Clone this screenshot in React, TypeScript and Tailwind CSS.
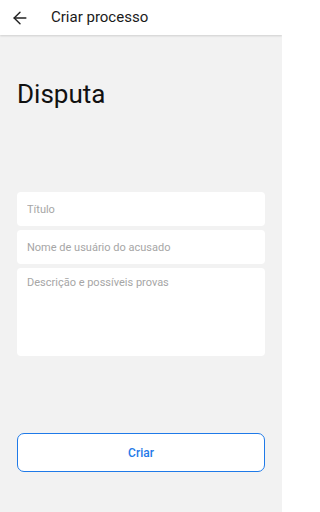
import { ArrowLeft } from 'lucide-react';

export default function App() {
  return (
    <div
      className="flex h-[512px] w-[282px] flex-col overflow-hidden bg-[#f2f2f2]"
      style={{ fontFamily: 'Roboto, "Noto Sans", sans-serif' }}
    >
      {/* Top bar */}
      <header className="flex h-[35px] shrink-0 items-center bg-white shadow-[0_1px_2px_rgba(0,0,0,0.15)]">
        <button className="ml-[10px] flex h-[20px] w-[20px] items-center justify-center text-[#222]">
          <ArrowLeft size={20} strokeWidth={1.7} />
        </button>
        <h1 className="ml-[21px] text-[15px] font-normal text-[#1a1a1a]">Criar processo</h1>
      </header>

      <main className="flex flex-1 flex-col px-[17px]">
        <h2 className="mt-[43px] text-[26px] leading-[32px] text-[#111]">Disputa</h2>

        {/* Form fields */}
        <div className="mt-[82px] flex flex-col gap-[4px]">
          <input
            placeholder="Título"
            className="h-[34px] w-full rounded-[4px] bg-white px-[10px] text-[11px] text-[#222] outline-none placeholder:text-[#a6a6a6]"
          />
          <input
            placeholder="Nome de usuário do acusado"
            className="h-[34px] w-full rounded-[4px] bg-white px-[10px] text-[11px] text-[#222] outline-none placeholder:text-[#a6a6a6]"
          />
          <textarea
            placeholder="Descrição e possíveis provas"
            className="h-[88px] w-full resize-none rounded-[4px] bg-white px-[10px] py-[8px] text-[11px] leading-[14px] text-[#222] outline-none placeholder:text-[#a6a6a6]"
          />
        </div>

        <button className="mt-[77px] h-[39px] w-full rounded-[7px] border-[1.5px] border-[#1f7ae8] bg-white text-[12px] font-medium text-[#1f7ae8]">
          Criar
        </button>
      </main>
    </div>
  );
}
